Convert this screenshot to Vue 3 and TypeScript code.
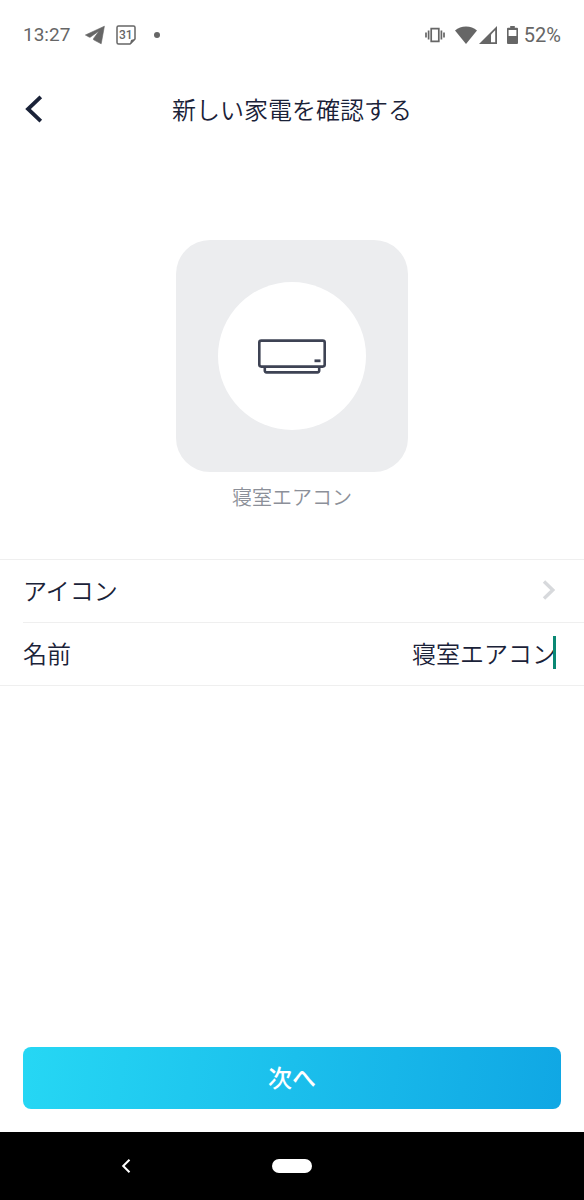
<script setup lang="ts">
import { ref } from 'vue'

const applianceName = ref<string>('寝室エアコン')
</script>

<template>
  <div class="screen">
    <div class="status-bar">
      <div class="status-left">
        <span class="clock">13:27</span>
        <svg class="telegram" width="20" height="20" viewBox="0 0 20 20" aria-hidden="true">
          <path d="M.4 10 19.4 1.2 16.2 18.8 8.6 14.8Q8 14.2 8.6 13.4L14 6 5.6 12Q4.9 12.5 4 12Z" fill="#666" stroke="#666" stroke-width=".6" stroke-linejoin="round" />
        </svg>
        <svg class="calendar" width="20" height="20" viewBox="0 0 20 20" aria-hidden="true">
          <path d="M2.5 1H17.5Q19 1 19 2.5V14L14 19H2.5Q1 19 1 17.5V2.5Q1 1 2.5 1Z" fill="none" stroke="#666" stroke-width="1.5" />
          <path d="M14.6 19.2V16.4Q14.6 14.6 16.4 14.6H19.2Z" fill="#666" />
          <text x="9.8" y="14" text-anchor="middle">31</text>
        </svg>
        <span class="dot"></span>
      </div>
      <div class="status-right">
        <svg class="vibrate" width="20" height="16" viewBox="0 0 20 16" aria-hidden="true">
          <path d="M6.2 1.7H13.8V14.3H6.2ZM3.6 3.5V12.5M16.4 3.5V12.5M1 5.5V10.5M19 5.5V10.5" fill="none" stroke="#666" stroke-width="1.7" />
        </svg>
        <svg class="wifi" width="22" height="18" viewBox="0 0 22 18" aria-hidden="true">
          <path d="M0 4.6Q4.6.4 11 .4T22 4.6L11 18Z" fill="#666" />
        </svg>
        <svg class="signal" width="18" height="18" viewBox="0 0 18 18" aria-hidden="true">
          <path d="M18 0V18H0Z" fill="#666" />
          <path d="M12 8.4 16.2 4.2V16.2H12Z" fill="#fff" />
        </svg>
        <svg class="battery" width="11" height="18" viewBox="0 0 11 18" aria-hidden="true">
          <path d="M3.2 0H7.8V1.8H10Q11 1.8 11 2.8V17Q11 18 10 18H1Q0 18 0 17V2.8Q0 1.8 1 1.8H3.2Z" fill="#666" />
          <path d="M1.6 4H9.4V10H1.6Z" fill="#fff" />
        </svg>
        <span>52%</span>
      </div>
    </div>

    <header class="header">
      <button class="back" type="button" aria-label="戻る">
        <svg width="18" height="28" viewBox="0 0 18 28" aria-hidden="true">
          <path d="M15.8 1.8 3 14 15.8 26.2" fill="none" stroke="#1a2238" stroke-width="3.8" />
        </svg>
      </button>
      <h1>新しい家電を確認する</h1>
    </header>

    <main>
      <section class="preview">
        <div class="tile">
          <div class="disc">
            <svg width="70" height="36" viewBox="0 0 70 36" aria-hidden="true">
              <g fill="none" stroke="#3e4354" stroke-width="2.6">
                <rect x="2.3" y="2.6" width="65.4" height="26" rx="2" />
                <path d="M7.8 29V32.6Q7.8 34.4 9.6 34.4H60.4Q62.2 34.4 62.2 32.6V29" />
              </g>
              <path d="M57.5 21.4H63.5V24.2H57.5Z" fill="#3e4354" />
            </svg>
          </div>
        </div>
        <p class="caption">{{ applianceName }}</p>
      </section>

      <section class="settings">
        <button class="row" type="button">
          <span>アイコン</span>
          <svg class="chevron" width="14" height="20" viewBox="0 0 14 20" aria-hidden="true">
            <path d="M2 1.5 10.8 10 2 18.5" fill="none" stroke="#d7d9dc" stroke-width="3.4" />
          </svg>
        </button>
        <div class="row name-row">
          <label for="appliance-name">名前</label>
          <div class="field">
            <input id="appliance-name" v-model="applianceName" type="text" autocomplete="off" />
            <span class="caret"></span>
          </div>
        </div>
      </section>
    </main>

    <footer class="actions">
      <button class="next" type="button">次へ</button>
    </footer>

    <nav class="system-nav">
      <button class="nav-back" type="button" aria-label="システムの戻る">
        <svg width="10" height="16" viewBox="0 0 10 16" aria-hidden="true">
          <path d="M8.5 1.7 2.2 8 8.5 14.3" fill="none" stroke="#fff" stroke-width="2" />
        </svg>
      </button>
      <button class="nav-home" type="button" aria-label="ホーム"></button>
      <span></span>
    </nav>
  </div>
</template>

<style>
body {
  margin: 0;
  background: #fff;
}
</style>

<style scoped>
.screen {
  display: flex;
  flex-direction: column;
  min-height: 100vh;
  background: #fff;
  color: #1a2238;
  font-family: "Noto Sans CJK JP", sans-serif;
  font-size: 24px;
  font-weight: 350;
  line-height: 36px;
}

button {
  padding: 0;
  border: 0;
  background: none;
  color: inherit;
  font: inherit;
}

svg {
  display: block;
  flex: none;
}

.status-bar {
  display: flex;
  justify-content: space-between;
  align-items: center;
  height: 70px;
  padding: 0 23px;
  color: #666;
  font: 400 20px/24px Roboto, sans-serif;
}

.clock {
  font-size: 19px;
}

.status-left,
.status-right {
  display: flex;
  align-items: center;
}

.telegram {
  margin-left: 15px;
}

.calendar {
  margin-left: 11px;
}

.calendar text {
  fill: #666;
  font: 500 12px Roboto, sans-serif;
}

.dot {
  width: 6px;
  height: 6px;
  margin-left: 18px;
  border-radius: 50%;
  background: #666;
}

.vibrate {
  margin-right: 10px;
}

.wifi {
  margin-right: 2px;
}

.signal {
  margin-right: 10px;
}

.battery {
  margin-right: 6px;
}

.header {
  display: grid;
  grid-template-columns: 48px 1fr 48px;
  align-items: center;
  height: 78px;
}

.back {
  padding-left: 25px;
}

h1 {
  margin: 0;
  font-size: 24px;
  font-weight: 350;
  text-align: center;
}

.preview {
  display: flex;
  flex-direction: column;
  align-items: center;
  padding: 92px 0 47px;
}

.tile {
  display: grid;
  place-items: center;
  width: 232px;
  height: 232px;
  border-radius: 34px;
  background: #ecedef;
}

.disc {
  display: grid;
  place-items: center;
  width: 148px;
  height: 148px;
  border-radius: 50%;
  background: #fff;
}

.caption {
  margin: 10px 0 0;
  color: #8c9099;
  font-size: 20px;
  line-height: 30px;
}

.settings {
  border-top: 1px solid #efefef;
  border-bottom: 1px solid #efefef;
}

.row {
  display: flex;
  justify-content: space-between;
  align-items: center;
  width: 100%;
  height: 62px;
  padding: 0 28px 2px 23px;
  box-sizing: border-box;
}

.name-row {
  width: auto;
  height: 63px;
  margin-left: 23px;
  padding-left: 0;
  border-top: 1px solid #efefef;
}

.field {
  position: relative;
  flex: 1;
  margin-left: 24px;
}

input {
  display: block;
  width: 100%;
  height: 36px;
  padding: 0;
  border: 0;
  outline: 0;
  background: none;
  color: inherit;
  font: inherit;
  text-align: right;
}

.caret {
  position: absolute;
  top: 1px;
  right: 0;
  width: 3px;
  height: 33px;
  background: #0a8874;
}

.actions {
  margin-top: auto;
  padding: 23px;
}

.next {
  display: block;
  width: 100%;
  height: 62px;
  padding-bottom: 2px;
  border-radius: 8px;
  background: linear-gradient(98deg, #26d7f4, #10a7e4);
  color: #fff;
  font-weight: 500;
}

.system-nav {
  display: grid;
  grid-template-columns: 1fr 40px 1fr;
  align-items: center;
  height: 68px;
  background: #000;
}

.nav-back {
  justify-self: center;
  margin-left: -20px;
}

.nav-home {
  height: 14px;
  border-radius: 7px;
  background: #fff;
}
</style>
